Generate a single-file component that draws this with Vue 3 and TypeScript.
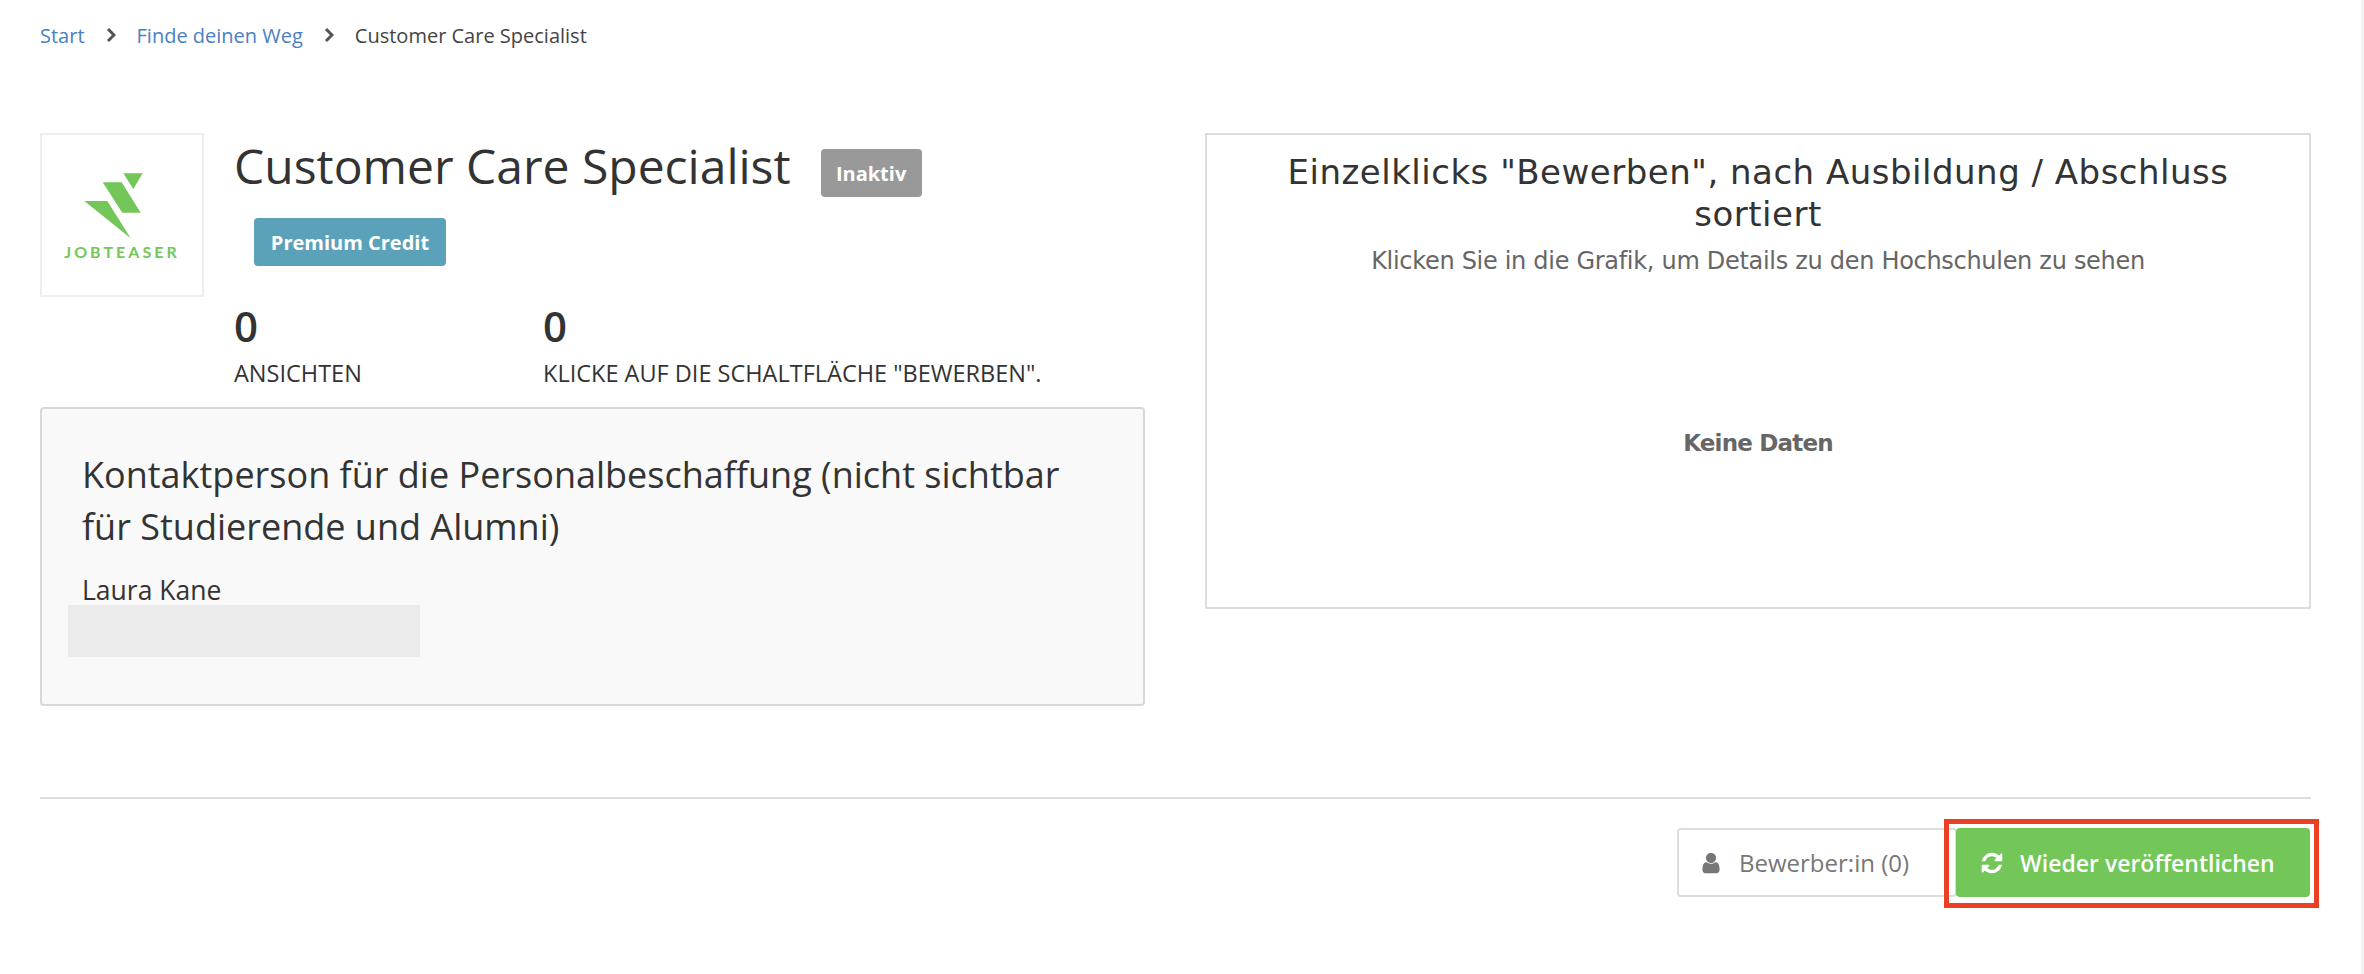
<template>
  <div class="page">
    <nav class="crumbs">
      <a class="link">Start</a>
      <svg class="chev" viewBox="0 0 10 16"><path d="M2 2l6 6-6 6" /></svg>
      <a class="link">Finde deinen Weg</a>
      <svg class="chev" viewBox="0 0 10 16"><path d="M2 2l6 6-6 6" /></svg>
      <span>Customer Care Specialist</span>
    </nav>

    <div class="columns">
      <section class="left">
        <div class="head">
          <div class="logo">
            <svg viewBox="0 0 160 160" width="160" height="160">
              <polygon points="81.3,38.3 100.7,38.3 91.3,54" fill="#72c758" />
              <polygon points="60.7,47.3 79.7,47.3 98.7,77.7 80.3,77.7" fill="#72c758" />
              <polygon points="42.3,66 65.3,66 88.7,103.3" fill="#72c758" />
              <text x="80" y="122.5" text-anchor="middle" class="logo-text">JOBTEASER</text>
            </svg>
          </div>
          <div class="info">
            <div class="title-row">
              <h1>Customer Care Specialist</h1>
              <span class="badge grey">Inaktiv</span>
            </div>
            <span class="badge blue">Premium Credit</span>
            <div class="stats">
              <div v-for="stat in stats" :key="stat.label" class="stat">
                <strong>{{ stat.value }}</strong>
                <span>{{ stat.label }}</span>
              </div>
            </div>
          </div>
        </div>

        <div class="contact">
          <h2>Kontaktperson für die Personalbeschaffung (nicht sichtbar für Studierende und Alumni)</h2>
          <p>Laura Kane</p>
          <div class="redacted"></div>
        </div>
      </section>

      <section class="chart">
        <h3>Einzelklicks "Bewerben", nach Ausbildung / Abschluss sortiert</h3>
        <p class="sub">Klicken Sie in die Grafik, um Details zu den Hochschulen zu sehen</p>
        <p class="empty">Keine Daten</p>
      </section>
    </div>

    <hr class="rule" />

    <div class="actions">
      <button type="button" class="btn outline">
        <svg class="icon" viewBox="0 0 1792 1792" fill="currentColor">
          <path d="M1536 1399q0 109-62.5 187t-150.5 78h-854q-88 0-150.5-78t-62.5-187q0-85 8.5-160.5t31.5-152 58.5-131 94-89 134.5-34.5q131 128 313 128t313-128q76 0 134.5 34.5t94 89 58.5 131 31.5 152 8.5 160.5zm-256-887q0 159-112.5 271.5t-271.5 112.5-271.5-112.5-112.5-271.5 112.5-271.5 271.5-112.5 271.5 112.5 112.5 271.5z" />
        </svg>
        {{ applicantLabel }}
      </button>
      <div class="highlight-wrap">
        <button type="button" class="btn green">
          <svg class="icon" viewBox="0 0 1792 1792" fill="currentColor">
            <path d="M1639 1056q0 5-1 7-64 268-268 434.5t-478 166.5q-146 0-282.5-55t-243.5-157l-129 129q-19 19-45 19t-45-19-19-45v-448q0-26 19-45t45-19h448q26 0 45 19t19 45-19 45l-137 137q71 66 161 102t187 36q134 0 250-65t186-179q11-17 53-117 8-23 30-23h192q13 0 22.5 9.5t9.5 22.5zm25-800v448q0 26-19 45t-45 19h-448q-26 0-45-19t-19-45 19-45l138-138q-148-137-349-137-134 0-250 65t-186 179q-11 17-53 117-8 23-30 23h-199q-13 0-22.5-9.5t-9.5-22.5v-7q65-268 270-434.5t480-166.5q146 0 284 55.5t245 156.5l130-129q19-19 45-19t45 19 19 45z" />
          </svg>
          Wieder veröffentlichen
        </button>
        <div class="highlight"></div>
      </div>
    </div>
  </div>
</template>

<script setup lang="ts">
const stats = [
  { value: 0, label: 'ANSICHTEN' },
  { value: 0, label: 'KLICKE AUF DIE SCHALTFLÄCHE "BEWERBEN".' }
];
const applicantLabel = 'Bewerber:in (0)';
</script>

<style>
html, body {
  background: #fff;
}
</style>

<style scoped>
.page {
  box-sizing: border-box;
  width: 2364px;
  height: 974px;
  padding: 0 50px 0 40px;
  font-family: "Open Sans", "Liberation Sans", sans-serif;
  color: #333;
  overflow: hidden;
  border-right: 3px solid #f2f2f2;
}
.crumbs {
  display: flex;
  align-items: center;
  height: 70px;
  font-size: 20px;
  color: #444;
}
.link {
  color: #4a80c4;
}
.chev {
  width: 10px;
  height: 16px;
  margin: 0 21px;
  fill: none;
  stroke: #555;
  stroke-width: 3;
}
.columns {
  display: flex;
  justify-content: space-between;
  margin-top: 63px;
}
.left {
  width: 1105px;
}
.head {
  display: flex;
  height: 274px;
}
.logo {
  box-sizing: border-box;
  width: 164px;
  height: 164px;
  border: 2px solid #eee;
  flex: none;
}
.logo-text {
  font-family: "Lato", sans-serif;
  font-size: 16px;
  font-weight: 700;
  letter-spacing: 3px;
  fill: #72c758;
}
.info {
  margin-left: 30px;
}
.title-row {
  display: flex;
  align-items: flex-start;
  height: 85px;
}
h1 {
  margin: 1px 0 0;
  font-size: 48px;
  font-weight: 400;
  line-height: 64px;
  color: #333;
}
.badge {
  display: inline-flex;
  align-items: center;
  justify-content: center;
  box-sizing: border-box;
  height: 48px;
  border-radius: 4px;
  color: #fff;
  font-size: 20px;
  font-weight: 700;
}
.grey {
  width: 101px;
  margin: 16px 0 0 30px;
  background: #999;
}
.blue {
  width: 192px;
  margin-left: 20px;
  background: #5ba1ba;
}
.stats {
  display: flex;
  margin-top: 32px;
}
.stat {
  display: flex;
  flex-direction: column;
}
.stat:first-child {
  width: 309px;
}
.stat strong {
  font-size: 42px;
  font-weight: 600;
  line-height: 56px;
}
.stat span {
  margin-top: 1px;
  font-size: 23.5px;
  line-height: 36px;
  white-space: nowrap;
}
.contact {
  box-sizing: border-box;
  height: 299px;
  padding: 40px 40px 0;
  background: #f9f9f9;
  border: 2px solid #d8d8d8;
  border-radius: 4px;
}
h2 {
  margin: 0;
  font-size: 36px;
  font-weight: 500;
  line-height: 52px;
}
.contact p {
  margin: 21px 0 0;
  font-size: 26.5px;
  line-height: 32px;
}
.redacted {
  width: 352px;
  height: 52px;
  margin: -1px 0 0 -14px;
  background: #ebebeb;
}
.chart {
  box-sizing: border-box;
  width: 1106px;
  height: 476px;
  padding: 16px 60px 0;
  border: 2px solid #ddd;
  text-align: center;
  font-family: "DejaVu Sans", sans-serif;
}
h3 {
  margin: 0;
  font-size: 34px;
  font-weight: 400;
  line-height: 42px;
  letter-spacing: 0.5px;
  color: #333;
}
.sub {
  margin: 10px 0 0;
  font-size: 24px;
  line-height: 32px;
  letter-spacing: -0.3px;
  color: #666;
}
.empty {
  margin: 150px 0 0;
  font-size: 23px;
  font-weight: 700;
  line-height: 32px;
  letter-spacing: -0.8px;
  color: #666;
}
.rule {
  height: 2px;
  margin: 91px 0 0;
  border: 0;
  background: #ddd;
}
.actions {
  display: flex;
  justify-content: flex-end;
  margin: 29px 1px 0 0;
}
.btn {
  display: inline-flex;
  align-items: center;
  box-sizing: border-box;
  height: 69px;
  padding: 0;
  border-radius: 4px;
  font-family: inherit;
  font-size: 24px;
}
.outline {
  width: 280px;
  padding-left: 20px;
  background: #fff;
  border: 2px solid #ddd;
  color: #777;
}
.green {
  width: 354px;
  padding-left: 24px;
  background: #72c758;
  border: 0;
  color: #fff;
  font-size: 23px;
  font-weight: 600;
}
.icon {
  width: 24px;
  height: 24px;
  margin-right: 16px;
}
.highlight-wrap {
  position: relative;
  margin-left: -1px;
}
.highlight {
  position: absolute;
  inset: -9px -9px -11px -12px;
  border: 5px solid #ea4023;
}
</style>
